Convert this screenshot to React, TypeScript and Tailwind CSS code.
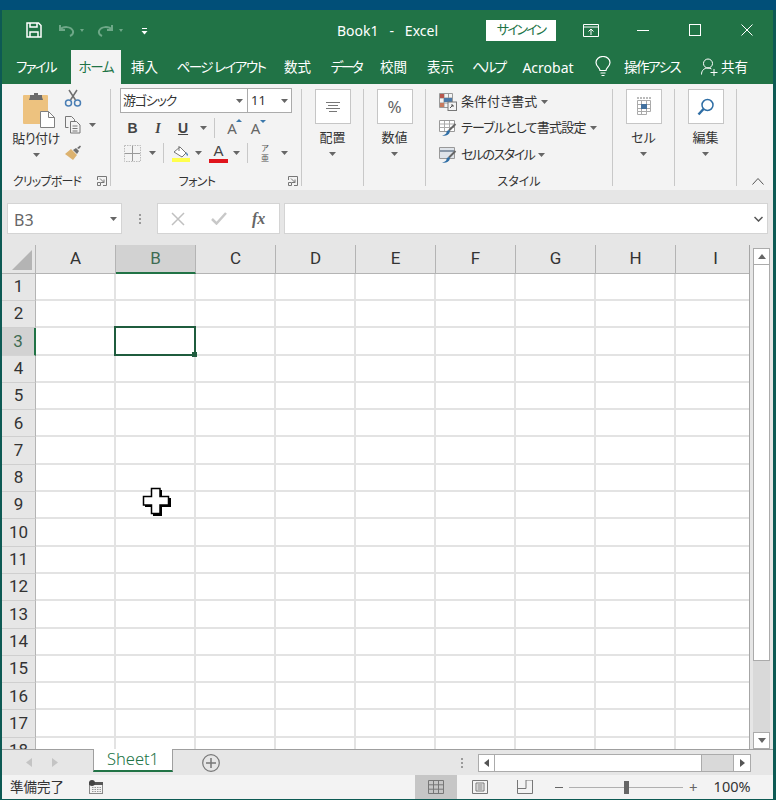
// App.tsx
const cols = ["A", "B", "C", "D", "E", "F", "G", "H", "I"];
const rows = Array.from({ length: 18 }, (_, i) => i + 1);
const tabs = [
  { label: "ファイル", cls: "w-[69px] pl-[14px] tracking-[-1.75px]" },
  { label: "ホーム", cls: "w-[50px] justify-center bg-[#f3f3f3] text-[#217346] tracking-[-1.3px]" },
  { label: "挿入", cls: "w-[47px] justify-center" },
  { label: "ページ レイアウト", cls: "w-[106px] justify-center tracking-[-1.5px]" },
  { label: "数式", cls: "w-[47px] justify-center" },
  { label: "データ", cls: "w-[50px] justify-center tracking-[-2.3px]" },
  { label: "校閲", cls: "w-[45px] justify-center" },
  { label: "表示", cls: "w-[49px] justify-center" },
  { label: "ヘルプ", cls: "w-[47px] justify-center tracking-[-2px]" },
  { label: "Acrobat", cls: "w-[72px] justify-center text-[14px]" },
];

function Caret({ className = "" }: { className?: string }) {
  return (
    <svg width="7" height="4" viewBox="0 0 7 4" className={className}>
      <path d="M0 0h7L3.5 4z" fill="#666" />
    </svg>
  );
}

function Launcher() {
  return (
    <svg width="10" height="10" viewBox="0 0 10 10" fill="none" stroke="#777">
      <path d="M.5 4V.5h9v9H6M.5 6.5h3v3h-3zM3 2.5l4 4M7 3.5v3H4" strokeWidth="1" />
    </svg>
  );
}

function Separator({ className = "" }: { className?: string }) {
  return <div className={`w-px bg-[#c8c8c8] ${className}`} />;
}

function Group({ width, label, labelCls = "", launcher, children }: { width: string; label?: string; labelCls?: string; launcher?: boolean; children: React.ReactNode }) {
  return (
    <div className={`${width} h-full shrink-0 pt-[5px] pb-[4px]`}>
      <div className="h-full border-r border-[#c8c8c8] flex flex-col">
        <div className="flex-1 min-h-0">{children}</div>
        <div className={`h-[14px] pt-[6px] flex items-center justify-center relative text-[12px] leading-none text-[#333] ${labelCls}`}>
          {label}
          {launcher && (
            <span className="absolute right-[3px] top-[4px]">
              <Launcher />
            </span>
          )}
        </div>
      </div>
    </div>
  );
}

function BigButton({ label, icon }: { label: string; icon: React.ReactNode }) {
  return (
    <div className="flex flex-col items-center">
      <div className="w-[36px] h-[35px] bg-white border border-[#c6c6c6] flex items-center justify-center">{icon}</div>
      <div className="mt-[5px] text-[13px] leading-[16px] text-[#333]">{label}</div>
      <Caret className="mt-[7px]" />
    </div>
  );
}

function StyleIcon({ kind }: { kind: "cond" | "table" | "cell" }) {
  if (kind === "cond") {
    return (
      <svg width="18" height="18" viewBox="0 0 18 18" fill="none">
        <path d="M.5.5h13v14H.5zM5 .5v14M9.500 .5v14M.5 5h13M.5 10h13" stroke="#999" />
        <rect x="1" y="1" width="4" height="4" fill="#b8574d" />
        <rect x="5" y="5" width="8" height="4" fill="#4a78a8" />
        <rect x="1" y="10" width="4" height="4" fill="#c77a5e" />
        <rect x="9" y="9" width="8.500" height="8.500" fill="#f3f3f3" stroke="#777" />
        <path d="M11 15l3-3M12 12h2v2" stroke="#555" />
      </svg>
    );
  }
  return (
    <svg width="18" height="18" viewBox="0 0 18 18" fill="none">
      <path d="M.5 1.500h15v11H.5z" stroke="#999" fill={kind === "cell" ? "#dfe4ea" : "#fff"} />
      {kind === "table" && <path d="M5.500 2v10M10.500 2v10M1 5h14M1 8.500h14" stroke="#aaa" />}
      {kind === "cell" && <path d="M1 5h14" stroke="#8a98a8" strokeWidth="2" />}
      <path d="M16.500 5L10 11.500" stroke="#666" strokeWidth="2" />
      <path d="M10 11c-2 .5-3 2-2.500 3-1 1.500-3 2.500-4.500 2.500 3 1 7 0 8-4z" fill="#2f6ea5" />
    </svg>
  );
}

function Ribbon() {
  return (
    <div className="h-[106px] bg-[#f3f3f3] flex">
      {/* クリップボード */}
      <Group width="w-[109px]" label="クリップボード" labelCls="pr-[18px] tracking-[-0.8px]" launcher>
        <div className="flex">
          <div className="w-[58px] pl-[10px] flex flex-col items-center">
            <svg width="34" height="36" viewBox="0 0 34 36" className="mt-[3px] ml-[6px]">
              <rect x="1" y="3" width="25" height="29" rx="1" fill="#edc27f" />
              <path d="M8 5V3h4V1h4v2h4v2l1 3H7z" fill="#6b6b6b" />
              <path d="M18.500 19.500h8l6 6v10h-14z" fill="#fff" stroke="#808080" />
              <path d="M26.500 19.500v6h6" fill="none" stroke="#808080" />
            </svg>
            <div className="mt-[2px] text-[13px] leading-[16px] text-[#333] whitespace-nowrap tracking-[-0.5px]">貼り付け</div>
            <Caret className="mt-[7px]" />
          </div>
          <div className="flex flex-col items-start">
            <svg width="18" height="18" viewBox="0 0 18 18" fill="none" className="ml-[4px]">
              <path d="M5 1l6.500 10M13 1L6.500 11" stroke="#6f6f6f" strokeWidth="1.500" />
              <circle cx="4.500" cy="14" r="3" stroke="#4b7fb5" strokeWidth="1.500" />
              <circle cx="13.500" cy="14" r="3" stroke="#4b7fb5" strokeWidth="1.500" />
            </svg>
            <div className="mt-[9px] ml-[4px] flex items-center">
              <svg width="18" height="18" viewBox="0 0 18 18" fill="none" stroke="#777">
                <path d="M1.500.5h6l3 3v3M1.500.5v11h3" />
                <path d="M6.500 5.500h6l3.500 3.500v8H6.500z" fill="#f3f3f3" />
                <path d="M8.500 10h5M8.500 12.500h5M8.500 15h5" />
              </svg>
              <Caret className="ml-[7px]" />
            </div>
            <svg width="18" height="16" viewBox="0 0 18 16" className="mt-[11px] ml-[4px]">
              <path d="M1 9l6-5 6 6-4 5z" fill="#dcb26f" />
              <path d="M9 5l3-2 3 3-2 3z" fill="#6f6f6f" />
              <path d="M13 3l3-2.500 1 1L15 4z" fill="#6f6f6f" />
            </svg>
          </div>
        </div>
      </Group>

      {/* フォント */}
      <Group width="w-[191px]" label="フォント" labelCls="pr-[18px] tracking-[-0.6px]" launcher>
        <div className="pl-[9px]">
          <div className="-mt-[1px] flex h-[25px] w-[172px] bg-white border border-[#ababab] text-[#333] text-[13px]">
            <div className="w-[127px] border-r border-[#ababab] pl-[2px] flex items-center justify-between pr-[4px]">
              <span className="tracking-[-1.2px]">游ゴシック</span>
              <Caret />
            </div>
            <div className="flex-1 pl-[3px] pr-[3px] flex items-center justify-between">
              <span>11</span>
              <Caret />
            </div>
          </div>
          <div className="mt-[5px] h-[20px] flex items-center text-[#444]">
            <span className="w-[25px] text-center text-[14px] font-bold [font-family:'Liberation_Sans']">B</span>
            <span className="w-[26px] text-center text-[14px] font-bold italic [font-family:'Liberation_Serif']">I</span>
            <span className="w-[24px] text-center text-[14px] font-bold underline [font-family:'Liberation_Sans']">U</span>
            <span className="w-[16px] flex justify-center"><Caret /></span>
            <Separator className="h-[20px] ml-[3px]" />
            <span className="w-[34px] text-center text-[15px] text-[#666] relative">A<span className="absolute left-[21px] top-[2px] border-x-[3px] border-x-transparent border-b-[3px] border-b-[#3b78ab]" /></span>
            <span className="w-[13px] text-center text-[15px] text-[#666] relative">A<span className="absolute left-[11px] top-[3px] border-x-[3px] border-x-transparent border-t-[3px] border-t-[#3b78ab]" /></span>
          </div>
          <div className="mt-[5px] h-[20px] flex items-center">
            <svg width="17" height="17" viewBox="0 0 17 17" fill="none" className="ml-[4px]">
              <path d="M.5.5h16v16H.5z" stroke="#bbb" strokeDasharray="1.500 1" />
              <path d="M8.500 1v15M1 8.500h15" stroke="#999" />
            </svg>
            <Caret className="ml-[8px]" />
            <Separator className="h-[20px] ml-[7px]" />
            <div className="ml-[7px] w-[19px] flex flex-col items-center">
              <svg width="18" height="13" viewBox="0 0 18 13" fill="none">
                <path d="M2 7l6-5 6 6-4 4z" fill="#fff" stroke="#777" />
                <path d="M7 1v5" stroke="#777" />
                <path d="M14 7c1 1 2 2 2 3s-1 1-1.500 0z" fill="#3b78ab" />
              </svg>
              <div className="h-[4px] w-[18px] bg-[#ffff4d]" />
            </div>
            <Caret className="ml-[5px]" />
            <div className="ml-[7px] w-[19px] flex flex-col items-center">
              <span className="text-[15px] leading-[14px] font-medium text-[#444] [font-family:'Liberation_Sans']">A</span>
              <div className="mt-[1px] h-[4px] w-[19px] bg-[#e0141c]" />
            </div>
            <Caret className="ml-[5px]" />
            <Separator className="h-[20px] ml-[7px]" />
            <div className="ml-[12px] w-[10px] flex flex-col items-center text-[8px] leading-[10px] text-[#555]">
              <span>ア</span>
              <span>亜</span>
            </div>
            <Caret className="ml-[11px]" />
          </div>
        </div>
      </Group>

      {/* 配置 */}
      <Group width="w-[62px]">
        <BigButton
          label="配置"
          icon={
            <svg width="14" height="10" viewBox="0 0 14 10" fill="none" stroke="#777">
              <path d="M0 .5h14M2 3.500h10M0 6.500h14M3 9.500h8" />
            </svg>
          }
        />
      </Group>

      {/* 数値 */}
      <Group width="w-[62px]">
        <BigButton label="数値" icon={<span className="text-[17px] text-[#666]">%</span>} />
      </Group>

      {/* スタイル */}
      <Group width="w-[187px]" label="スタイル">
        <div className="pl-[13px] flex flex-col text-[13px] text-[#333] whitespace-nowrap">
          <div className="h-[27px] flex items-center gap-[4px] -mt-[1px]">
            <StyleIcon kind="cond" />
            <span>条件付き書式</span>
            <Caret />
          </div>
          <div className="h-[26px] flex items-center gap-[4px]">
            <StyleIcon kind="table" />
            <span className="tracking-[-0.8px]">テーブルとして書式設定</span>
            <Caret />
          </div>
          <div className="h-[27px] flex items-center gap-[4px]">
            <StyleIcon kind="cell" />
            <span className="tracking-[-1.5px]">セルのスタイル</span>
            <Caret />
          </div>
        </div>
      </Group>

      {/* セル */}
      <Group width="w-[62px]">
        <BigButton
          label="セル"
          icon={
            <svg width="16" height="20" viewBox="0 0 16 20" fill="none">
              <path d="M1 1h14" stroke="#777" strokeDasharray="2 1" />
              <path d="M1.500 3.500h13v11h-13zM5.500 3.500v14M10.500 3.500v11M1.500 7.500h13M1.500 11.500h13M1.500 14.500v3h9v-3" stroke="#aaa" />
              <rect x="5" y="7" width="6" height="5" fill="#44729f" />
            </svg>
          }
        />
      </Group>

      {/* 編集 */}
      <Group width="w-[62px]">
        <BigButton
          label="編集"
          icon={
            <svg width="18" height="18" viewBox="0 0 18 18" fill="none" stroke="#2f6ea5">
              <circle cx="10.500" cy="7" r="5.500" strokeWidth="1.500" />
              <path d="M6.500 11L1.500 16.500" strokeWidth="2.500" />
            </svg>
          }
        />
      </Group>

      <div className="flex-1 flex items-end justify-end pr-[9px] pb-[5px]">
        <svg width="12" height="7" viewBox="0 0 12 7" fill="none" stroke="#555">
          <path d="M.5 6.500l5.500-6 5.500 6" />
        </svg>
      </div>
    </div>
  );
}

function FormulaBar() {
  return (
    <div className="h-[55px] bg-[#e6e6e6] flex items-start pt-[13px] pl-[5px] pr-[5px]">
      <div className="w-[115px] h-[31px] bg-white border border-[#d4d4d4] flex items-center justify-between pl-[6px] pr-[4px] text-[16px] text-[#666]">
        <span className="mt-[2px]">B3</span>
        <Caret />
      </div>
      <div className="w-[35px] h-[31px] flex flex-col items-center justify-center gap-[2px]">
        <span className="w-[2px] h-[2px] bg-[#9a9a9a]" />
        <span className="w-[2px] h-[2px] bg-[#9a9a9a]" />
        <span className="w-[2px] h-[2px] bg-[#9a9a9a]" />
      </div>
      <div className="w-[123px] h-[31px] bg-white border border-[#d4d4d4] flex items-center">
        <svg width="14" height="14" viewBox="0 0 14 14" fill="none" stroke="#c0c0c0" strokeWidth="1.500" className="ml-[13px]">
          <path d="M1 1l12 12M13 1L1 13" />
        </svg>
        <svg width="16" height="13" viewBox="0 0 16 13" fill="none" stroke="#c8c8c8" strokeWidth="2.500" className="ml-[26px]">
          <path d="M1 7l4.500 4.500L15 1" />
        </svg>
        <span className="ml-[25px] text-[16px] font-bold italic text-[#666] [font-family:'Liberation_Serif']">fx</span>
      </div>
      <div className="ml-[4px] flex-1 h-[31px] bg-white border border-[#d4d4d4] flex items-center justify-end pr-[4px]">
        <svg width="9" height="6" viewBox="0 0 9 6" fill="none" stroke="#555" strokeWidth="1.500">
          <path d="M.5 1l4 4 4-4" />
        </svg>
      </div>
    </div>
  );
}

function Cursor() {
  return (
    <svg width="30" height="30" viewBox="0 0 30 30" className="absolute left-[140px] top-[242px]">
      <path d="M11 3h9v8h9v9h-9v9h-9v-9H3v-9h8z" fill="#000" />
      <path d="M9.500 1.500h8.500v8h8.500v8.500h-8.500v8.500H9.500V18H1.500V9.500h8z" fill="#fff" stroke="#000" strokeWidth="1.500" />
    </svg>
  );
}

function Sheet() {
  return (
    <div className="h-[504px] flex bg-[#e6e6e6] relative">
      <div className="w-[748px] h-full overflow-hidden border-r border-[#a6a6a6]">
        <div className="grid grid-cols-[34px_repeat(9,80px)] grid-rows-[28.700px] auto-rows-[27.300px] text-[17px] [font-family:Roboto]">
          {/* corner */}
          <div className="bg-[#e6e6e6] border-b border-r border-[#b4b4b4] flex items-end justify-end pr-[3px] pb-[3px]">
            <svg width="20" height="20" viewBox="0 0 20 20">
              <path d="M20 0v20H0z" fill="#b4b4b4" />
            </svg>
          </div>
          {cols.map((c) => (
            <div
              key={c}
              className={
                c === "B"
                  ? "bg-[#d2d2d2] border-b-2 border-r border-b-[#217346] border-r-[#b4b4b4] flex items-center justify-center text-[#3e6b52]"
                  : "bg-[#e6e6e6] border-b border-r border-[#b4b4b4] flex items-center justify-center text-[#333]"
              }
            >
              {c}
            </div>
          ))}
          {rows.map((r) => (
            <div key={r} className="contents">
              <div
                className={
                  r === 3
                    ? "bg-[#d2d2d2] border-r-2 border-b border-r-[#217346] border-b-[#d4d4d4] flex items-center justify-center text-[#3e6b52]"
                    : "bg-[#e6e6e6] border-r border-b border-r-[#b4b4b4] border-b-[#cfcfcf] flex items-center justify-center text-[#333]"
                }
              >
                {r}
              </div>
              {cols.map((c) => (
                <div key={c} className="bg-white border-r-2 border-b-2 border-[#e3e3e3] relative">
                  {r === 3 && c === "B" && (
                    <div className="absolute -left-[2px] -top-[2px] -right-[2px] -bottom-[2px] border-2 border-[#1f5c3e] z-10">
                      <span className="absolute -right-[3px] -bottom-[3px] w-[5px] h-[5px] bg-[#1f5c3e]" />
                    </div>
                  )}
                </div>
              ))}
            </div>
          ))}
        </div>
      </div>
      {/* vertical scrollbar */}
      <div className="flex-1 pl-[3px] pr-[3px] pt-[3px] flex flex-col">
        <div className="h-[17px] bg-white border border-[#ababab] flex items-center justify-center shrink-0">
          <svg width="8" height="5" viewBox="0 0 8 5"><path d="M4 0l4 5H0z" fill="#666" /></svg>
        </div>
        <div className="h-[396px] bg-white border-x border-b border-[#ababab] shrink-0" />
        <div className="flex-1 bg-[#d9d9d9]" />
        <div className="h-[17px] bg-white border border-[#ababab] flex items-center justify-center shrink-0">
          <svg width="8" height="5" viewBox="0 0 8 5"><path d="M4 5l4-5H0z" fill="#666" /></svg>
        </div>
      </div>
      <Cursor />
    </div>
  );
}

function SheetTabs() {
  return (
    <div className="h-[26px] bg-[#e6e6e6] border-t border-[#9f9f9f] flex text-[16.500px] font-light">
      <div className="w-[91px] flex items-center pl-[24px] gap-[20px]">
        <svg width="6" height="9" viewBox="0 0 6 9"><path d="M6 0v9L0 4.500z" fill="#c4c4c4" /></svg>
        <svg width="6" height="9" viewBox="0 0 6 9"><path d="M0 0v9l6-4.500z" fill="#c4c4c4" /></svg>
      </div>
      <div className="w-[80px] -mt-px h-[23px] bg-white border-x border-b-2 border-x-[#9f9f9f] border-b-[#217346] flex items-center justify-center text-[#217346]">
        Sheet1
      </div>
      <div className="ml-[29px] flex items-center">
        <svg width="18" height="18" viewBox="0 0 18 18" fill="none" stroke="#777">
          <circle cx="9" cy="9" r="8.300" strokeWidth="1.200" />
          <path d="M9 4v10M4 9h10" strokeWidth="1.500" />
        </svg>
      </div>
      <div className="ml-[241px] flex flex-col items-center justify-center gap-[2px]">
        <span className="w-[2px] h-[2px] bg-[#9a9a9a]" />
        <span className="w-[2px] h-[2px] bg-[#9a9a9a]" />
        <span className="w-[2px] h-[2px] bg-[#9a9a9a]" />
      </div>
      <div className="ml-[15px] mt-[4px] w-[273px] h-[18px] flex border border-[#ababab] bg-white">
        <div className="w-[16px] border-r border-[#ababab] flex items-center justify-center">
          <svg width="5" height="8" viewBox="0 0 5 8"><path d="M5 0v8L0 4z" fill="#555" /></svg>
        </div>
        <div className="w-[207px] border-r border-[#ababab]" />
        <div className="flex-1 bg-[#d9d9d9]" />
        <div className="w-[17px] border-l border-[#ababab] flex items-center justify-center">
          <svg width="5" height="8" viewBox="0 0 5 8"><path d="M0 0v8l5-4z" fill="#555" /></svg>
        </div>
      </div>
    </div>
  );
}

function StatusBar() {
  return (
    <div className="h-[25px] bg-[#f3f3f3] border-b border-[#0d5a54] flex items-center text-[13.500px] text-[#333]">
      <span className="ml-[8px] w-[79px]">準備完了</span>
      <svg width="14" height="14" viewBox="0 0 14 14" fill="none">
        <rect x=".5" y="2.500" width="13" height="11" stroke="#888" />
        <rect x="0" y="2" width="14" height="3" fill="#555" />
        <circle cx="3" cy="3" r="3" fill="#444" />
        <path d="M3 7.500h9M3 9.500h9M3 11.500h9" stroke="#999" strokeDasharray="1.500 1" />
      </svg>
      <div className="ml-[312px] w-[42px] h-[24px] bg-[#c6c6c6] flex items-center justify-center">
        <svg width="16" height="14" viewBox="0 0 16 14" fill="none" stroke="#777">
          <path d="M.5.5h15v13H.5zM5.500 .5v13M10.500 .5v13M.5 4.800h15M.5 9.200h15" />
        </svg>
      </div>
      <svg width="16" height="14" viewBox="0 0 16 14" fill="none" stroke="#777" className="ml-[15px]">
        <path d="M.5.5h15v13H.5zM4 3h8v8H4zM5.500 5h5M5.500 7h5M5.500 9h5" />
      </svg>
      <svg width="16" height="14" viewBox="0 0 16 14" fill="none" stroke="#777" className="ml-[29px]">
        <path d="M.5 0v13.500h15V0M.5 8.500h8.500V0M9 0h6.500" />
      </svg>
      <div className="ml-[22px] w-[8px] h-px bg-[#666]" />
      <div className="ml-[6px] w-[114px] h-px bg-[#b0b0b0] relative">
        <span className="absolute left-[55px] -top-[6px] w-[5px] h-[13px] bg-[#666]" />
      </div>
      <span className="ml-[6px] text-[15px] leading-none text-[#666]">+</span>
      <span className="ml-[16px] text-[14.500px]">100%</span>
    </div>
  );
}

export default function App() {
  return (
    <div className="w-[776px] h-[800px] overflow-hidden bg-[#014f78] pt-[10px] [font-feature-settings:'palt'] [font-family:'Noto_Sans','Noto_Sans_CJK_JP',sans-serif]">
      <div className="h-[790px] border-x-2 border-x-[#0d5a54] border-r-[3px] flex flex-col">
        {/* title bar */}
        <div className="h-[40px] bg-[#217346] flex items-center text-white">
          <div className="w-[335px] flex items-center pl-[24px]">
            <svg width="16" height="16" viewBox="0 0 16 16" fill="none">
              <path d="M1 1h11.500L15 3.500V15H1z" stroke="#fff" strokeWidth="1.500" />
              <path d="M4 1v4h7V1M4 15v-5h8v5" stroke="#fff" strokeWidth="1.500" />
            </svg>
            <svg width="17" height="13" viewBox="0 0 17 13" fill="none" stroke="#6ea888" strokeWidth="2" className="ml-[16px]">
              <path d="M2 1v5h5M2 6c3-4 11-4 13 1 .5 2-1 4-3 5" />
            </svg>
            <span className="ml-[5px] w-0 h-0 border-x-[2.500px] border-x-transparent border-t-[3px] border-t-[#6ea888]" />
            <svg width="17" height="13" viewBox="0 0 17 13" fill="none" stroke="#6ea888" strokeWidth="2" className="ml-[13px]">
              <path d="M15 1v5h-5M15 6C12 2 4 2 2 7c-.5 2 1 4 3 5" />
            </svg>
            <span className="ml-[5px] w-0 h-0 border-x-[2.500px] border-x-transparent border-t-[3px] border-t-[#6ea888]" />
            <svg width="7" height="7" viewBox="0 0 7 7" className="ml-[18px] mt-[2px]">
              <path d="M1 .5h5" stroke="#fff" />
              <path d="M.5 3h6L3.500 6.500z" fill="#fff" />
            </svg>
          </div>
          <div className="w-[149px] text-[14px] whitespace-pre">Book1   -   Excel</div>
          <div className="w-[70px] h-[21px] bg-white text-[#217346] text-[13px] tracking-[-2px] flex items-center justify-center">サインイン</div>
          <svg width="16" height="13" viewBox="0 0 16 13" fill="none" stroke="#fff" className="ml-[27px]">
            <path d="M.5.5h15v12H.5zM.5 3h15M8 11V5M5.500 7.500L8 5l2.500 2.500" />
          </svg>
          <div className="ml-[38px] w-[12px] h-px bg-white" />
          <div className="ml-[40px] w-[12px] h-[12px] border border-white" />
          <svg width="12" height="12" viewBox="0 0 12 12" fill="none" stroke="#fff" className="ml-[40px]">
            <path d="M.5.500l11 11M11.500 .5l-11 11" />
          </svg>
        </div>

        {/* ribbon tabs */}
        <div className="h-[34px] bg-[#217346] flex text-[13.500px] text-white whitespace-nowrap">
          {tabs.map((t) => (
            <div key={t.label} className={`flex items-center ${t.cls}`}>
              {t.label}
            </div>
          ))}
          <div className="w-[37px] flex items-center justify-center">
            <svg width="16" height="22" viewBox="0 0 16 22" fill="none" stroke="#fff">
              <path d="M5 14.500c0-2.500-4-4-4-8a7 6 0 0 1 14 0c0 4-4 5.500-4 8z" strokeWidth="1.200" />
              <path d="M5.500 17h5M6.500 19.500h3" strokeWidth="1.200" />
            </svg>
          </div>
          <div className="w-[60px] flex items-center pl-[3px] tracking-[-1.5px]">操作アシス</div>
          <div className="flex items-center gap-[3px] pl-[20px]">
            <svg width="17" height="18" viewBox="0 0 17 18" fill="none" stroke="#fff">
              <circle cx="7" cy="5.500" r="4.500" />
              <path d="M.5 16.500c0-4 2.500-6.500 6.500-6.500 1.500 0 2.500.5 3.500 1M9.500 14.500h7M13 11v7" />
            </svg>
            <span>共有</span>
          </div>
        </div>

        <Ribbon />
        <FormulaBar />
        <Sheet />
        <SheetTabs />
        <StatusBar />
      </div>
    </div>
  );
}
